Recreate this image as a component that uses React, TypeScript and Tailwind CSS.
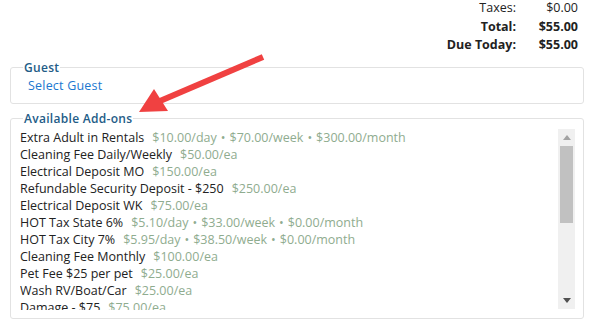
import React from "react";

const addons = [
  { name: "Extra Adult in Rentals", price: ["$10.00/day", "$70.00/week", "$300.00/month"] },
  { name: "Cleaning Fee Daily/Weekly", price: ["$50.00/ea"] },
  { name: "Electrical Deposit MO", price: ["$150.00/ea"] },
  { name: "Refundable Security Deposit - $250", price: ["$250.00/ea"] },
  { name: "Electrical Deposit WK", price: ["$75.00/ea"] },
  { name: "HOT Tax State 6%", price: ["$5.10/day", "$33.00/week", "$0.00/month"] },
  { name: "HOT Tax City 7%", price: ["$5.95/day", "$38.50/week", "$0.00/month"] },
  { name: "Cleaning Fee Monthly", price: ["$100.00/ea"] },
  { name: "Pet Fee $25 per pet", price: ["$25.00/ea"] },
  { name: "Wash RV/Boat/Car", price: ["$25.00/ea"] },
  { name: "Damage - $75", price: ["$75.00/ea"] },
];

export default function App() {
  return (
    <div className="relative w-[591px] h-[325px] overflow-hidden bg-white text-[#222] font-['Open_Sans',sans-serif]">
      {/* Totals */}
      <div className="flex justify-end pr-[13px] -mt-[1px]">
        <div className="grid grid-cols-[auto_62px] text-[12.5px] leading-[18.5px] text-right">
          <span>Taxes:</span>
          <span>$0.00</span>
          <span className="font-bold">Total:</span>
          <span className="font-bold">$55.00</span>
          <span className="font-bold">Due Today:</span>
          <span className="font-bold">$55.00</span>
        </div>
      </div>

      {/* Guest */}
      <fieldset className="mx-[10px] mt-[6px] w-[574px] h-[43px] border border-[#e2e2e2] rounded-[3px] px-[12px]">
        <legend className="px-[1px] text-[12px] font-semibold tracking-[0.3px] text-[#235c87] leading-[14px]">Guest</legend>
        <div className="pl-[5px] pt-[3px] text-[12.5px] tracking-[0.2px] text-[#1b77cf] leading-[16px]">Select Guest</div>
      </fieldset>

      {/* Add-ons */}
      <fieldset className="mx-[10px] mt-[8px] w-[574px] h-[207px] border border-[#e2e2e2] rounded-[3px] pl-[9px] pr-[8px]">
        <legend className="ml-[3px] px-[1px] text-[12px] font-semibold tracking-[0.3px] text-[#235c87] leading-[14px]">Available Add-ons</legend>
        <div className="flex h-[181px] mt-[3px]">
          <div className="flex-1 overflow-hidden">
            {addons.map((a) => (
              <div key={a.name} className="h-[17px] leading-[17px] text-[12.5px] whitespace-nowrap">
                <span className="text-[#222]">{a.name}</span>
                <span className="ml-[8px] text-[#8fac8f]">
                  {a.price.map((p, i) => (
                    <React.Fragment key={p}>
                      {i > 0 && <span className="mx-[4px]">•</span>}
                      {p}
                    </React.Fragment>
                  ))}
                </span>
              </div>
            ))}
          </div>
          {/* scrollbar */}
          <div className="w-[17px] h-[180px] bg-[#f0f0f0] flex flex-col items-center">
            <div className="h-[17px] flex items-center justify-center">
              <svg width="8" height="5" viewBox="0 0 8 5"><path d="M4 0 L8 5 L0 5 Z" fill="#a3a3a3" /></svg>
            </div>
            <div className="w-[13px] h-[77px] bg-[#c1c1c1]" />
            <div className="flex-1" />
            <div className="h-[17px] flex items-center justify-center">
              <svg width="8" height="5" viewBox="0 0 8 5"><path d="M0 0 L8 0 L4 5 Z" fill="#505050" /></svg>
            </div>
          </div>
        </div>
      </fieldset>

      {/* Red arrow annotation */}
      <svg className="absolute left-0 top-0 pointer-events-none" width="591" height="325">
        <line x1="263" y1="57" x2="160" y2="101" stroke="#f04141" strokeWidth="6" />
        <path d="M139 112 L154 89 L168 111 Z" fill="#f04141" />
      </svg>
    </div>
  );
}
